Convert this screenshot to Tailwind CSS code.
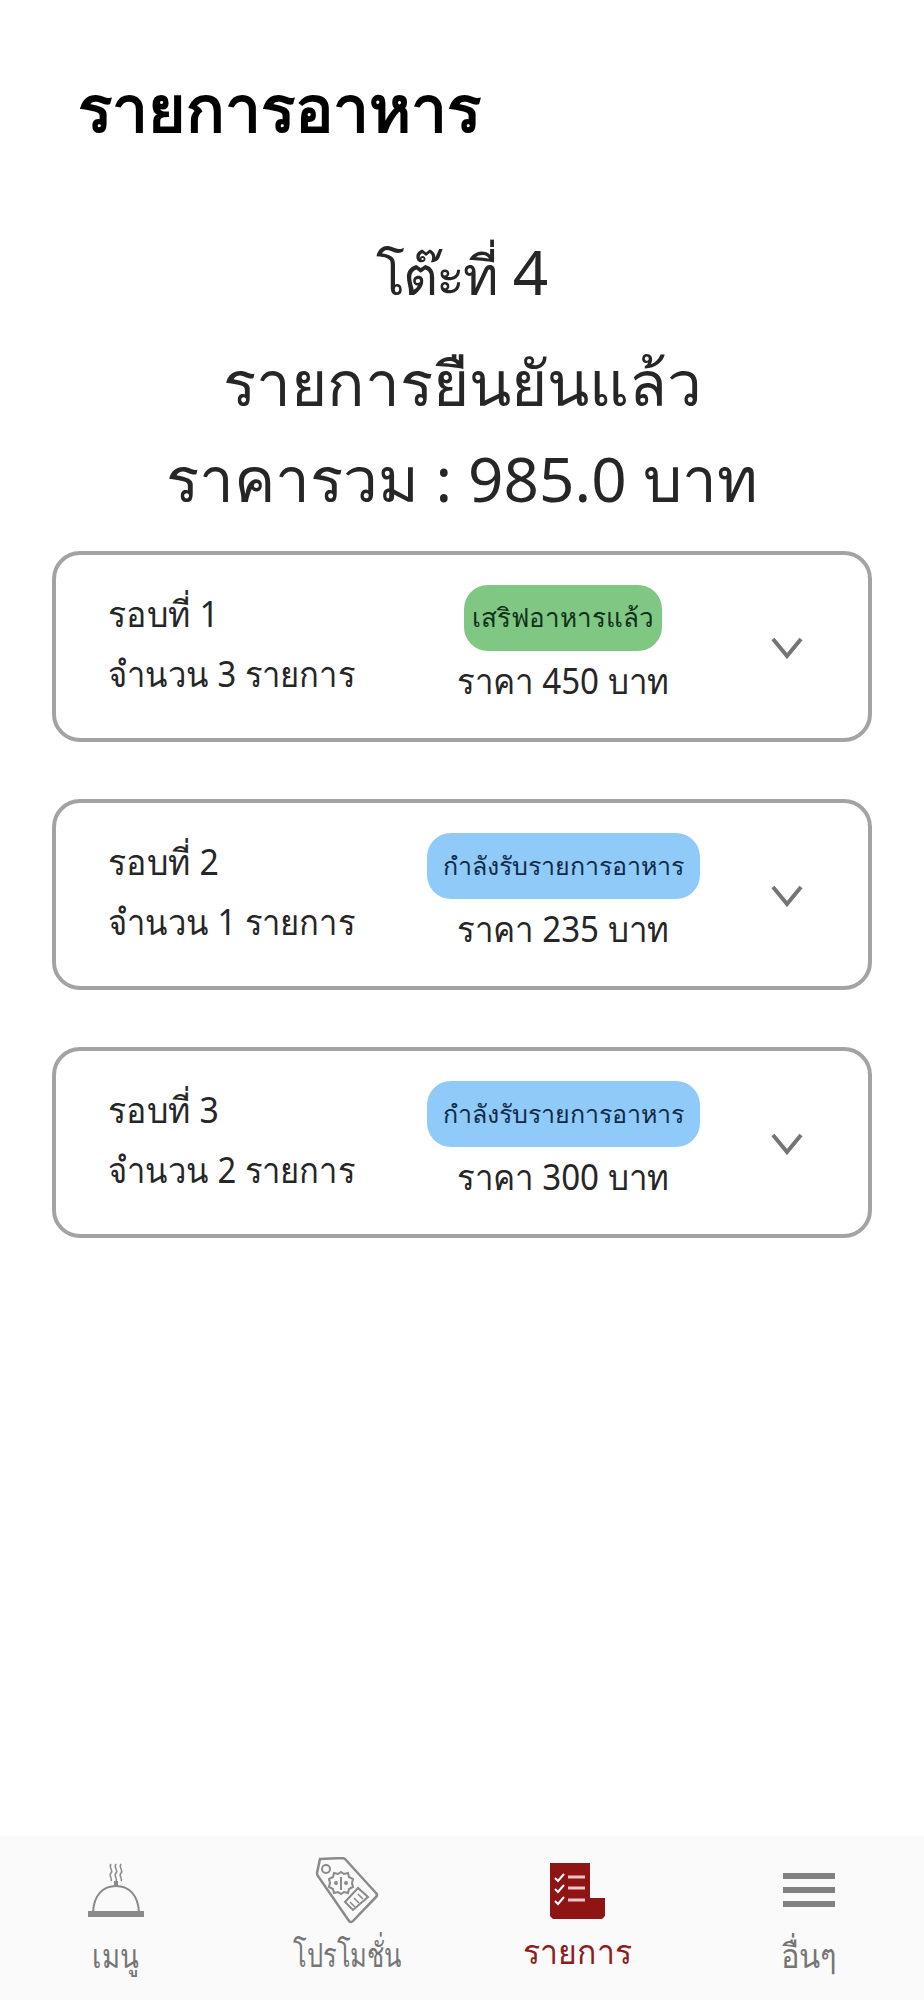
<!DOCTYPE html>
<html lang="th">
<head>
  <meta charset="UTF-8">
  <meta name="viewport" content="width=device-width, initial-scale=1.0">
  <title>รายการอาหาร</title>
  <script src="https://cdn.jsdelivr.net/npm/@tailwindcss/browser@4"></script>
</head>
<body class="bg-white text-[#262626] font-['Noto_Sans','DejaVu_Sans',sans-serif]">
  <div class="h-[2000px] flex flex-col">
    <main class="flex-1 flex flex-col">
      <h1 class="pl-[78px] pt-[73px] text-[64px] leading-[70px] font-bold text-black">รายการอาหาร</h1>

      <div class="mt-[68px] text-center">
        <p class="text-[62px] leading-[120px]"><span class="text-[54px] tracking-[-2px]">โต๊ะที่</span> 4</p>
        <p class="text-[62px] leading-[97px]">รายการยืนยันแล้ว</p>
        <p class="text-[62px] leading-[94px]">ราคารวม : 985.0 บาท</p>
      </div>

      <div class="mt-[26px] mx-[52px] flex flex-col gap-[57px]">
        <div class="h-[191px] border-[4px] border-[#a3a3a3] rounded-[28px] flex items-center pl-[52px] pr-[64px]">
          <div class="w-[318px] text-[36px] leading-[60px] -mt-[5px]">
            <p class="origin-left scale-x-[.94]">รอบที่ 1</p>
            <p class="origin-left scale-x-[.91]">จำนวน 3 รายการ</p>
          </div>
          <div class="w-[274px] flex flex-col items-center">
            <span class="w-[198px] h-[66px] flex items-center justify-center rounded-[24px] bg-[#81c784] text-[26px] whitespace-nowrap text-[#10301a]">เสริฟอาหารแล้ว</span>
            <p class="mt-[2px] text-[36px] leading-[56px] whitespace-nowrap scale-x-[.92]">ราคา 450 บาท</p>
          </div>
          <svg class="ml-auto w-[34px] h-[24px] text-[#757575]" viewBox="0 0 34 24" fill="none" stroke="currentColor" stroke-width="4"><path d="M3 4l14 17L31 4"/></svg>
        </div>

        <div class="h-[191px] border-[4px] border-[#a3a3a3] rounded-[28px] flex items-center pl-[52px] pr-[64px]">
          <div class="w-[318px] text-[36px] leading-[60px] -mt-[5px]">
            <p class="origin-left scale-x-[.94]">รอบที่ 2</p>
            <p class="origin-left scale-x-[.91]">จำนวน 1 รายการ</p>
          </div>
          <div class="w-[274px] flex flex-col items-center">
            <span class="w-[273px] h-[66px] flex items-center justify-center rounded-[24px] bg-[#90caf9] text-[25px] whitespace-nowrap text-[#0f2a47]">กำลังรับรายการอาหาร</span>
            <p class="mt-[2px] text-[36px] leading-[56px] whitespace-nowrap scale-x-[.92]">ราคา 235 บาท</p>
          </div>
          <svg class="ml-auto w-[34px] h-[24px] text-[#757575]" viewBox="0 0 34 24" fill="none" stroke="currentColor" stroke-width="4"><path d="M3 4l14 17L31 4"/></svg>
        </div>

        <div class="h-[191px] border-[4px] border-[#a3a3a3] rounded-[28px] flex items-center pl-[52px] pr-[64px]">
          <div class="w-[318px] text-[36px] leading-[60px] -mt-[5px]">
            <p class="origin-left scale-x-[.94]">รอบที่ 3</p>
            <p class="origin-left scale-x-[.91]">จำนวน 2 รายการ</p>
          </div>
          <div class="w-[274px] flex flex-col items-center">
            <span class="w-[273px] h-[66px] flex items-center justify-center rounded-[24px] bg-[#90caf9] text-[25px] whitespace-nowrap text-[#0f2a47]">กำลังรับรายการอาหาร</span>
            <p class="mt-[2px] text-[36px] leading-[56px] whitespace-nowrap scale-x-[.92]">ราคา 300 บาท</p>
          </div>
          <svg class="ml-auto w-[34px] h-[24px] text-[#757575]" viewBox="0 0 34 24" fill="none" stroke="currentColor" stroke-width="4"><path d="M3 4l14 17L31 4"/></svg>
        </div>
      </div>
    </main>

    <nav class="h-[164px] bg-[#fafafa] grid grid-cols-4 text-[34px] text-[#757575] pt-[21px]">
      <div class="flex flex-col items-center">
        <div class="h-[68px] flex items-center">
          <svg class="w-[56px] h-[56px]" viewBox="0 0 56 56" fill="none" stroke="#8a8a8a" stroke-width="2">
            <path d="M23 1c-3 4 3 6 0 9s2 5 0 8M28 1c-3 4 3 6 0 9s2 5 0 8M33 1c-3 4 3 6 0 9s2 5 0 8" stroke-width="1.5"/>
            <path d="M5 49C6 32 15 23 28 23s22 9 23 26"/>
            <path d="M28 18v5" stroke-width="4"/>
            <path d="M0 51h56" stroke-width="6"/>
          </svg>
        </div>
        <span class="mt-[5px] leading-[50px] scale-x-[.81]">เมนู</span>
      </div>
      <div class="flex flex-col items-center">
        <div class="h-[68px] flex items-center">
          <svg class="w-[64px] h-[68px]" viewBox="0 0 64 68" fill="none" stroke="#8a8a8a" stroke-width="2">
            <path d="M5 2l22-1q2 0 3 1l31 34q2 2 0 4L38 64q-2 2-4 0L3 19q-1-1-1-3z" stroke-width="2.5"/>
            <circle cx="11" cy="12" r="4"/>
            <path d="M26 15l3 2 4-1 1 4 4 2-1 4 1 4-4 2-1 4-4-1-3 2-3-2-4 1-1-4-4-2 1-4-1-4 4-2 1-4 4 1z"/>
            <path d="M26 20v13" stroke-width="2"/>
            <circle cx="21" cy="26" r="2" fill="#8a8a8a" stroke="none"/>
            <circle cx="31" cy="26" r="2" fill="#8a8a8a" stroke="none"/>
            <path d="M30 45l13-14 10 9-15 13z"/>
            <path d="M35 45l5 5M39 41l5 5M43 37l5 5" stroke-width="1.5"/>
          </svg>
        </div>
        <span class="mt-[4px] leading-[50px] scale-x-[.75] whitespace-nowrap">โปรโมชั่น</span>
      </div>
      <div class="flex flex-col items-center">
        <div class="h-[68px] flex items-center">
          <svg class="w-[55px] h-[56px]" viewBox="0 0 55 56">
            <path d="M0 0h40v35h15v18l-3 3H3l-3-3z" fill="#8f1414"/>
            <path d="M5 15l3 3 6-7M5 26l3 3 6-7M5 38l3 3 6-7" fill="none" stroke="#fff" stroke-width="2"/>
            <path d="M18 14h17M18 25h17M18 37h17" stroke="#f5c6c6" stroke-width="3"/>
          </svg>
        </div>
        <span class="mt-[1px] leading-[50px] font-medium text-[#8f1d1d] scale-x-[.94]">รายการ</span>
      </div>
      <div class="flex flex-col items-center">
        <div class="h-[68px] flex items-center">
          <svg class="w-[52px] h-[40px]" viewBox="0 0 52 40" fill="none" stroke="#808080" stroke-width="6">
            <path d="M0 5h52M0 19h52M0 33h52"/>
          </svg>
        </div>
        <span class="mt-[5px] leading-[50px] scale-x-[.91] whitespace-nowrap">อื่นๆ</span>
      </div>
    </nav>
  </div>
</body>
</html>
